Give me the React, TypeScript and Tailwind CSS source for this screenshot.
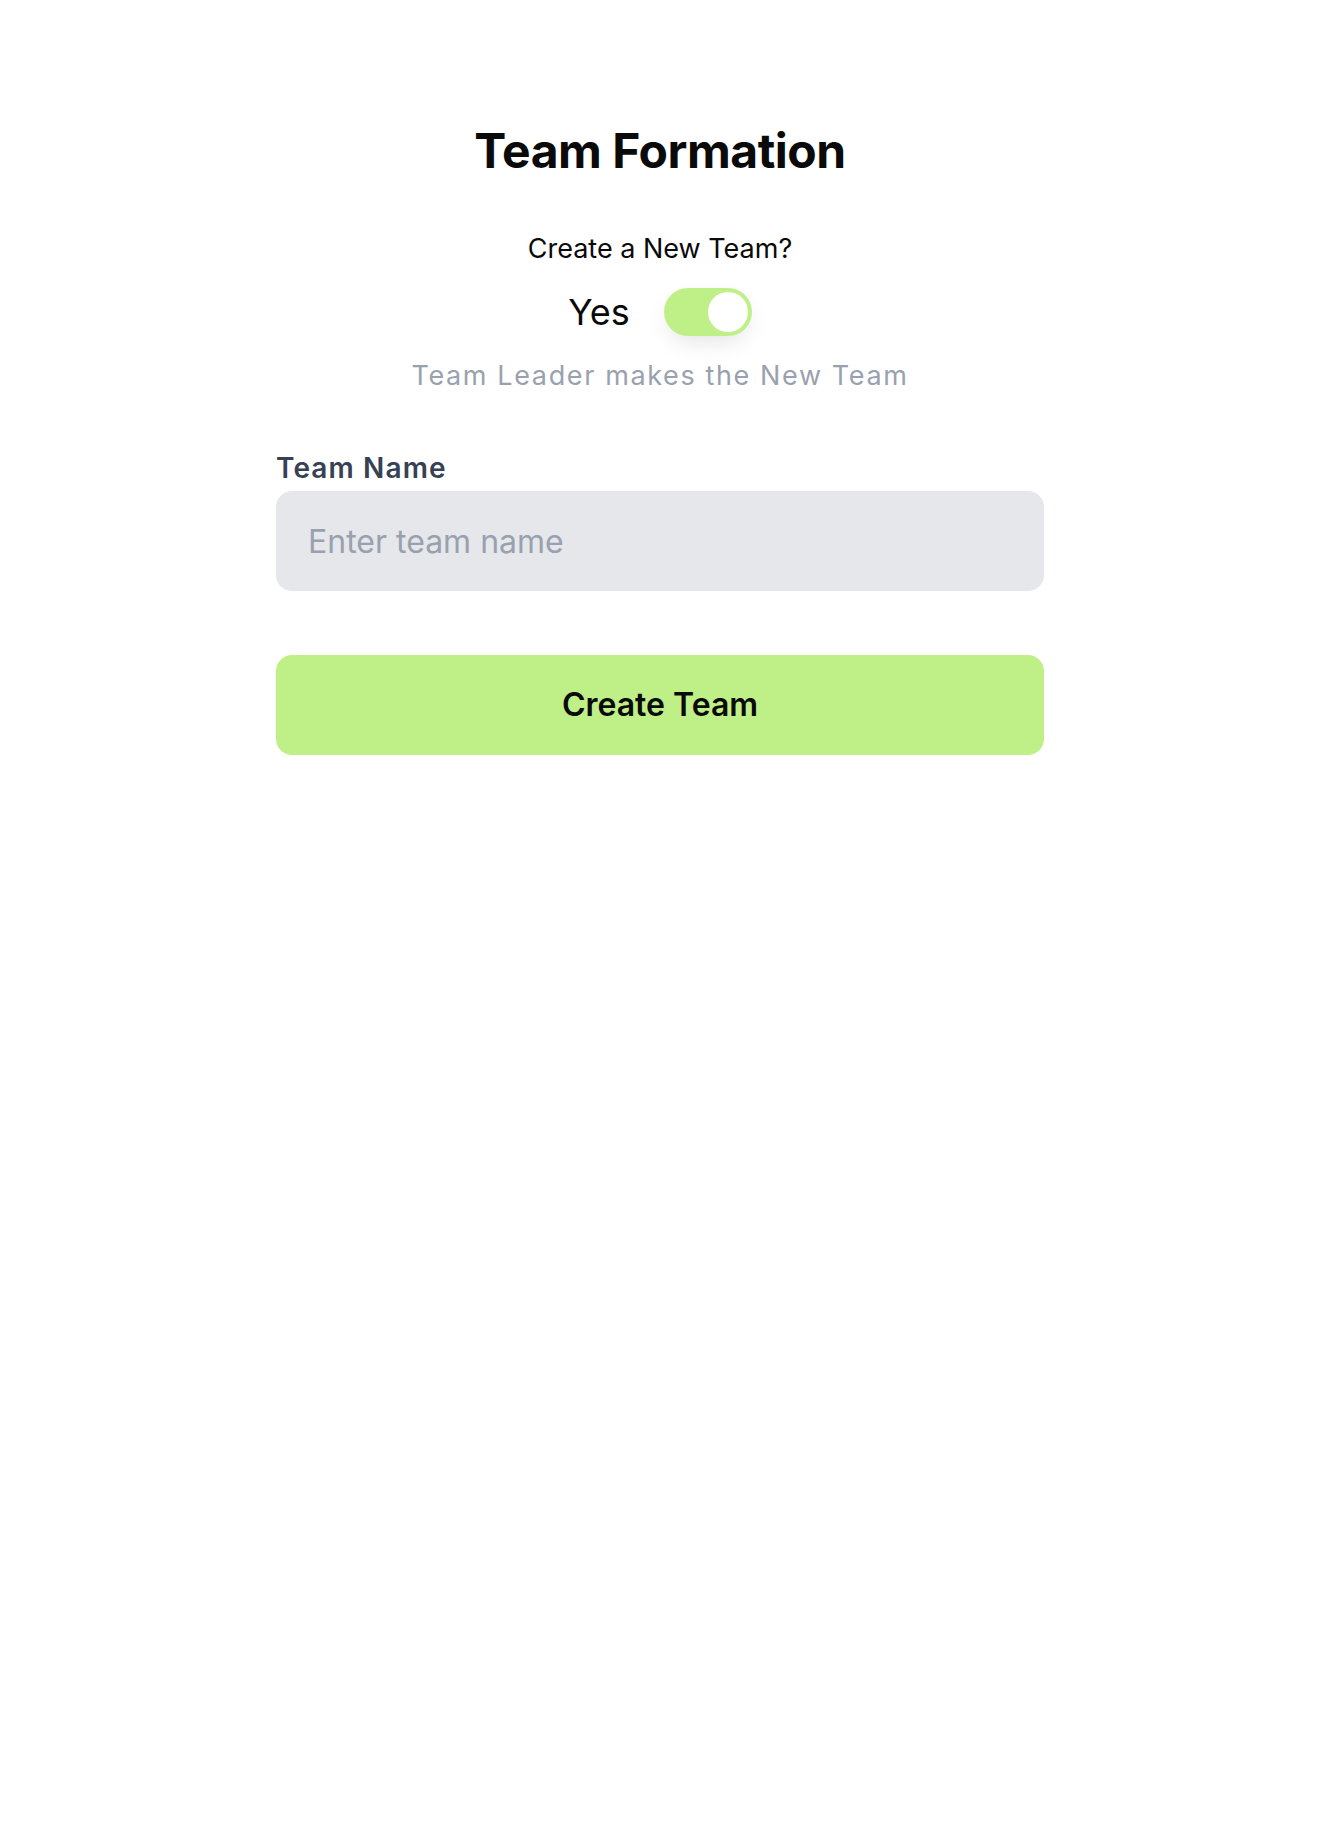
import { useState } from 'react'

export default function App() {
  const [createNew, setCreateNew] = useState(true)

  return (
    <div className="min-h-[1836px] bg-white font-['Inter',sans-serif] text-[#0a0a0a]">
      <div className="mx-auto flex max-w-3xl flex-col items-center pt-[127px]">
        <h1 className="text-[48px] font-bold leading-none tracking-[-0.01em]">Team Formation</h1>

        <p className="mt-[54px] text-[27px] leading-[1.5]">Create a New Team?</p>

        <div className="mt-[18px] flex items-center gap-[34px]">
          <span className="text-[36px] leading-none">{createNew ? 'Yes' : 'No'}</span>
          <button
            type="button"
            onClick={() => setCreateNew(!createNew)}
            className={`flex h-12 w-[88px] items-center rounded-full p-1 shadow-[0_10px_24px_-6px_rgba(0,0,0,0.12)] ${createNew ? 'justify-end bg-[#bef087]' : 'justify-start bg-gray-300'}`}
          >
            <span className="size-10 rounded-full bg-white" />
          </button>
        </div>

        <p className="mt-[20px] text-[27px] leading-[1.5] tracking-[0.06em] text-gray-400">
          Team Leader makes the New Team
        </p>

        <div className="mt-[51px] w-full">
          <label className="block text-[28px] font-semibold leading-[1.5] tracking-[0.04em] text-gray-700">
            Team Name
          </label>
          <input
            placeholder="Enter team name"
            className="mt-[2px] h-[100px] w-full rounded-2xl bg-gray-200 px-8 text-[32px] text-gray-800 outline-none placeholder:text-gray-400"
          />
          <button
            type="button"
            className="mt-16 flex h-[100px] w-full items-center justify-center rounded-2xl bg-[#bff087] text-[32px] font-semibold"
          >
            Create Team
          </button>
        </div>
      </div>
    </div>
  )
}
